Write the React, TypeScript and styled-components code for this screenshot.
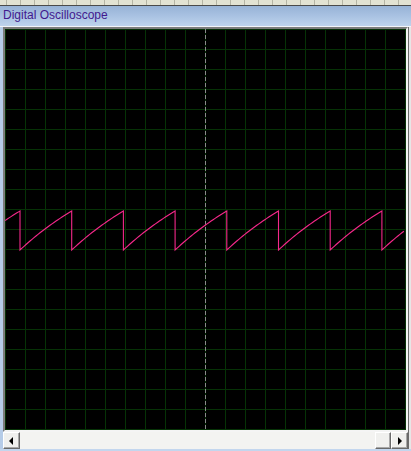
import React from "react";
import styled, { createGlobalStyle } from "styled-components";

const GlobalStyle = createGlobalStyle`
  html, body {
    margin: 0;
    padding: 0;
    background: #ffffff;
  }
`;

const Frame = styled.div`
  width: 411px;
  height: 451px;
  display: flex;
  flex-direction: column;
  background: #c3d6ee;
  overflow: hidden;
`;

const Ruler = styled.div`
  height: 5px;
  flex: none;
  border-bottom: 1px solid #4a4a4a;
  background-color: #e2e2d2;
  background-image: repeating-linear-gradient(
    to right,
    transparent 0,
    transparent 6px,
    #b4b4a4 6px,
    #b4b4a4 7px,
    transparent 7px,
    transparent 14px
  );
`;

const TitleBar = styled.div`
  height: 20px;
  flex: none;
  border-bottom: 1px solid #f2f4f8;
  padding-left: 3px;
  background: linear-gradient(to bottom, #97b3d6 0%, #a9c2e2 50%, #bed3ec 100%);
  font-family: "Liberation Sans", Arial, sans-serif;
  font-size: 12px;
  line-height: 19px;
  color: #42198e;
  white-space: nowrap;
`;

const Body = styled.div`
  flex: none;
  display: flex;
  flex-direction: row;
`;

const LeftEdge = styled.div`
  width: 3px;
  flex: none;
  background: #b6cce8;
`;

const Main = styled.div`
  width: 405px;
  flex: none;
  display: flex;
  flex-direction: column;
`;

const RightEdge = styled.div`
  width: 2px;
  flex: none;
  border-left: 1px solid #6c6c6c;
  background: #e6e6e6;
`;

const Well = styled.div`
  border-style: solid;
  border-width: 2px;
  border-color: #7c7c7c #f4f4f4 #f4f4f4 #7c7c7c;
  background: #000;
  line-height: 0;
`;

const Screen = styled.svg`
  display: block;
  width: 401px;
  height: 401px;
  background: #000000;
`;

const ScrollBar = styled.div`
  height: 17px;
  display: flex;
  flex-direction: row;
  background: #f3f3f1;
`;

const ScrollButton = styled.div`
  width: 17px;
  height: 17px;
  box-sizing: border-box;
  flex: none;
  display: flex;
  align-items: center;
  justify-content: center;
  background: #f0f0ee;
  border-style: solid;
  border-width: 1px;
  border-color: #ffffff #6a6a6a #6a6a6a #ffffff;
  box-shadow: inset -1px -1px 0 #a8a8a8;
`;

const Track = styled.div`
  flex: 1;
  display: flex;
  justify-content: flex-end;
`;

const Thumb = styled.div`
  width: 16px;
  height: 17px;
  box-sizing: border-box;
  background: #f0f0ee;
  border-style: solid;
  border-width: 1px;
  border-color: #ffffff #6a6a6a #6a6a6a #ffffff;
  box-shadow: inset -1px -1px 0 #a8a8a8;
`;

const Arrow = styled.span<{ $dir: "left" | "right" }>`
  width: 0;
  height: 0;
  border-top: 4px solid transparent;
  border-bottom: 4px solid transparent;
  ${(p) =>
    p.$dir === "left"
      ? "border-right: 4px solid #000; margin-right: 1px;"
      : "border-left: 4px solid #000; margin-left: 1px;"}
`;

const SIZE = 401;
const STEP = 20;
const PERIOD = 51.7;
const FIRST_DROP = 15;
const LOW = 221;
const SWING = 39;
const K = 0.45;

const charge = (u: number) => (1 - Math.exp(-K * u)) / (1 - Math.exp(-K));

function sawtooth(): string {
  const pts: string[] = [];
  const yAt = (x: number) => {
    let u = ((x - FIRST_DROP) % PERIOD) / PERIOD;
    if (u < 0) u += 1;
    return LOW - SWING * charge(u);
  };
  const drops: number[] = [];
  for (let d = FIRST_DROP; d < SIZE; d += PERIOD) drops.push(d);

  let x = 0;
  pts.push(`M0 ${yAt(0).toFixed(2)}`);
  for (const d of drops) {
    for (let t = x + 2; t < d; t += 2) pts.push(`L${t.toFixed(2)} ${yAt(t).toFixed(2)}`);
    pts.push(`L${d.toFixed(2)} ${(LOW - SWING).toFixed(2)}`);
    pts.push(`L${d.toFixed(2)} ${LOW}`);
    x = d;
  }
  for (let t = x + 2; t <= SIZE - 1; t += 2) pts.push(`L${t.toFixed(2)} ${yAt(t).toFixed(2)}`);
  return pts.join(" ");
}

const Grid: React.FC = () => {
  const lines: React.ReactNode[] = [];
  for (let i = 0; i <= SIZE; i += STEP) {
    lines.push(<line key={`v${i}`} x1={i + 0.5} y1={0} x2={i + 0.5} y2={SIZE} />);
    lines.push(<line key={`h${i}`} x1={0} y1={i + 0.5} x2={SIZE} y2={i + 0.5} />);
  }
  return (
    <g stroke="#063206" strokeWidth={1}>
      {lines}
    </g>
  );
};

export default function App() {
  return (
    <>
      <GlobalStyle />
      <Frame>
        <Ruler />
        <TitleBar>Digital Oscilloscope</TitleBar>
        <Body>
          <LeftEdge />
          <Main>
            <Well>
              <Screen viewBox={`0 0 ${SIZE} ${SIZE}`}>
                <Grid />
                <line
                  x1={200.5}
                  y1={0}
                  x2={200.5}
                  y2={SIZE}
                  stroke="#8a8a8a"
                  strokeWidth={1}
                  strokeDasharray="4 2"
                />
                <path d={sawtooth()} fill="none" stroke="#f5288a" strokeWidth={1.1} />
              </Screen>
            </Well>
            <ScrollBar>
              <ScrollButton>
                <Arrow $dir="left" />
              </ScrollButton>
              <Track>
                <Thumb />
              </Track>
              <ScrollButton>
                <Arrow $dir="right" />
              </ScrollButton>
            </ScrollBar>
          </Main>
          <RightEdge />
        </Body>
      </Frame>
    </>
  );
}
